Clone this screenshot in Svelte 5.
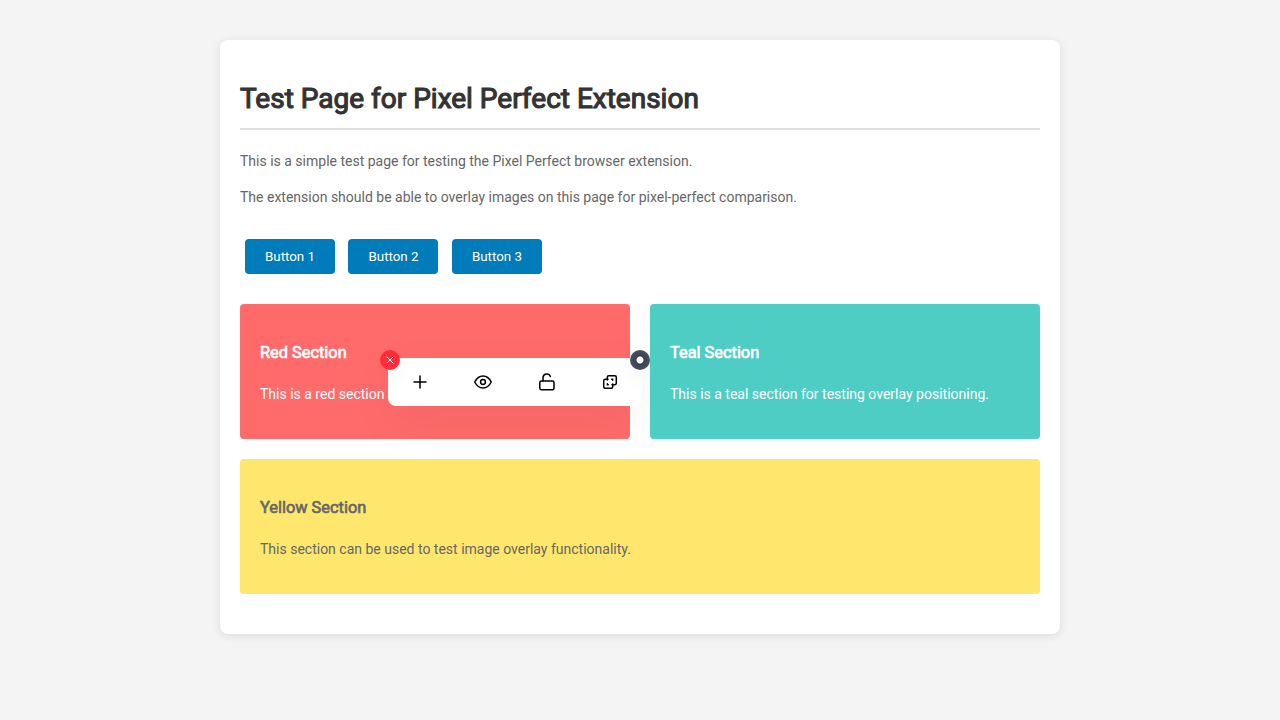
<script>
  const buttons = ['Button 1', 'Button 2', 'Button 3'];
  let visible = $state(true);
</script>

<main class="card">
  <h1>Test Page for Pixel Perfect Extension</h1>
  <p>This is a simple test page for testing the Pixel Perfect browser extension.</p>
  <p>The extension should be able to overlay images on this page for pixel-perfect comparison.</p>

  <div class="actions">
    {#each buttons as label}
      <button class="action" type="button">{label}</button>{' '}
    {/each}
  </div>

  <div class="sections">
    <section class="red">
      <h3>Red Section</h3>
      <p>This is a red section for testing overlay positioning.</p>
    </section>
    <section class="teal">
      <h3>Teal Section</h3>
      <p>This is a teal section for testing overlay positioning.</p>
    </section>
    <section class="yellow">
      <h3>Yellow Section</h3>
      <p>This section can be used to test image overlay functionality.</p>
    </section>
  </div>
</main>

{#if visible}
  <div class="toolbar" role="toolbar" aria-label="Overlay tools">
    <button class="tool" type="button" aria-label="Add image">
      <svg width="20" height="20" viewBox="0 0 20 20"><path d="M10 4v12M4 10h12" /></svg>
    </button>
    <button class="tool" type="button" aria-label="Show overlay">
      <svg width="20" height="20" viewBox="0 0 20 20">
        <path d="M1.700 10C3.700 6.200 6.500 4 10 4s6.300 2.200 8.300 6c-2 3.800-4.800 6-8.300 6s-6.300-2.200-8.300-6Z" />
        <circle cx="10" cy="10" r="2.400" />
      </svg>
    </button>
    <button class="tool" type="button" aria-label="Unlock overlay">
      <svg width="20" height="20" viewBox="0 0 20 20">
        <rect x="2.800" y="9" width="14.200" height="8.700" rx="1.500" />
        <path d="M6 9V5.800a3.800 3.800 0 0 1 7.400-1.200" />
      </svg>
    </button>
    <button class="tool" type="button" aria-label="Invert overlay">
      <svg width="20" height="20" viewBox="0 0 20 20">
        <path d="M7.300 8V5.200A1.500 1.500 0 0 1 8.800 3.700h6A1.500 1.500 0 0 1 16.300 5.200v6a1.500 1.500 0 0 1-1.500 1.500H12" />
        <path d="M8 7.300H5.200A1.500 1.500 0 0 0 3.700 8.800v6a1.500 1.500 0 0 0 1.500 1.500h6a1.500 1.500 0 0 0 1.500-1.500V12" />
        <path d="M11.700 7.300h1V8.300M7.300 11.700v1h1" />
      </svg>
    </button>
    <button class="knob close" type="button" aria-label="Close" onclick={() => (visible = false)}>
      <svg width="10" height="10" viewBox="0 0 10 10"><path d="m2 2 6 6m0-6-6 6" /></svg>
    </button>
    <button class="knob drag" type="button" aria-label="Move toolbar"></button>
  </div>
{/if}

<style>
  :global(body) {
    background: #f4f4f4;
    color: #666;
    font: 14px/22px Roboto, sans-serif;
  }
  .card {
    box-sizing: border-box;
    max-width: 840px;
    margin: 40px auto;
    padding: 40px 20px;
    background: #fff;
    border-radius: 8px;
    box-shadow: 0 2px 10px rgba(0, 0, 0, 0.1);
  }
  h1,
  h3 {
    font-weight: 400;
    -webkit-text-stroke: 0.04em currentColor;
  }
  h1 {
    margin: 0 0 20px;
    padding-bottom: 10px;
    border-bottom: 2px solid #e0e0e0;
    color: #333;
    font-size: 28px;
    line-height: 38px;
  }
  p {
    margin: 0 0 14px;
  }
  .actions {
    margin: 26px 0 25px;
    display: flow-root;
    line-height: 20px;
  }
  .action {
    margin: 5px;
    padding: 10px 20px;
    border: 0;
    border-radius: 4px;
    background: #007cba;
    color: #fff;
    font-family: inherit;
    cursor: pointer;
  }
  .sections {
    display: grid;
    grid-template-columns: 1fr 1fr;
    gap: 20px;
  }
  section {
    padding: 36px 20px 20px;
    border-radius: 4px;
  }
  h3 {
    margin: 0 0 17px;
    font-size: 1.17em;
    line-height: 26px;
  }
  .red {
    background: #ff6b6b;
    color: #fff;
  }
  .teal {
    position: relative;
    z-index: 2;
    background: #4ecdc4;
    color: #fff;
  }
  .yellow {
    position: relative;
    z-index: 2;
    grid-column: 1 / -1;
    background: #ffe66d;
  }
  .toolbar {
    position: fixed;
    z-index: 1;
    top: calc(50% - 2px);
    right: calc(50% - 2px);
    width: 254px;
    height: 48px;
    display: grid;
    grid-template-columns: repeat(4, 1fr);
    background: #fff;
    border-radius: 8px;
    box-shadow: 0 16px 50px rgba(0, 0, 0, 0.05);
  }
  .tool {
    display: flex;
    align-items: center;
    justify-content: center;
    padding: 0;
    border: 0;
    background: none;
    color: #000;
    cursor: pointer;
  }
  svg {
    fill: none;
    stroke: currentColor;
    stroke-width: 1.5;
    stroke-linecap: round;
    stroke-linejoin: round;
  }
  .knob {
    position: absolute;
    top: -8px;
    width: 20px;
    height: 20px;
    display: flex;
    align-items: center;
    justify-content: center;
    padding: 0;
    border: 0;
    border-radius: 50%;
    box-shadow: 0 8px 20px rgba(0, 0, 0, 0.05);
    color: #fff;
    cursor: pointer;
  }
  .close {
    left: -8px;
    background: #ff2d3b;
  }
  .close svg {
    stroke-width: 1;
  }
  .drag {
    right: -8px;
    background: radial-gradient(circle closest-side, #fff 3px, #394150 4px, #4a5062 10px);
  }
</style>
